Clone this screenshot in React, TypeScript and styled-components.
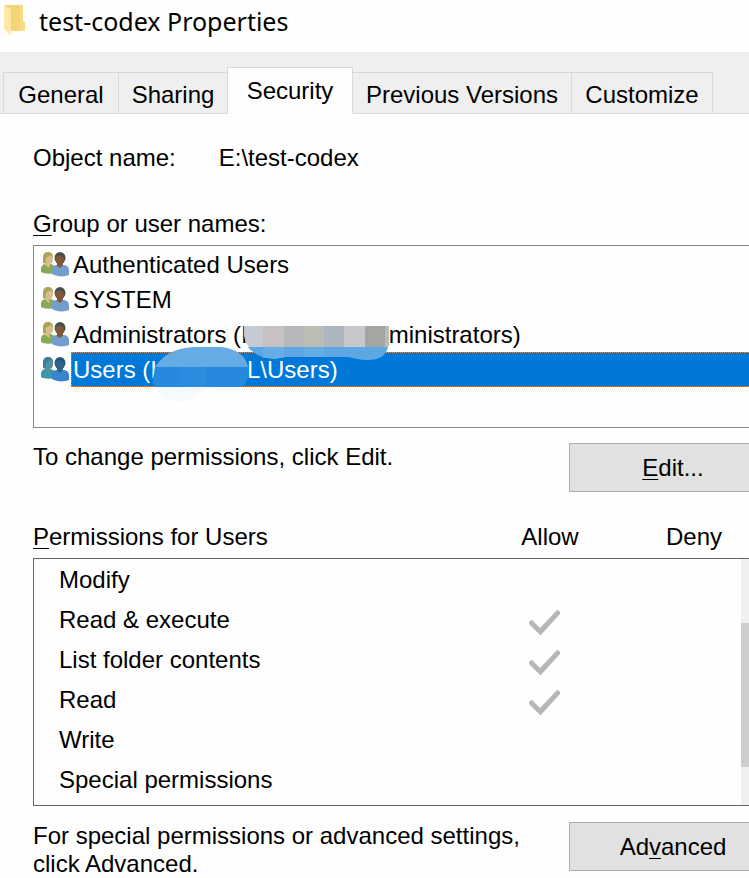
import React from "react";
import styled, { createGlobalStyle, css } from "styled-components";

const GlobalStyle = createGlobalStyle`
  * { box-sizing: border-box; }
  body {
    margin: 0;
    background: #fefefe;
    color: #000;
    font: 24px/28px "Liberation Sans", Arial, sans-serif;
    overflow-x: hidden;
  }
  u {
    text-decoration-thickness: 1px;
    text-underline-offset: 3px;
    text-decoration-skip-ink: none;
  }
`;

const Dialog = styled.main`
  overflow: hidden;
`;

const TitleBar = styled.header`
  display: flex;
  align-items: center;
  gap: 13px;
  height: 52px;
  padding: 0 4px 10px;
`;

const Title = styled.h1`
  margin: 0;
  font: 400 25px/34px "Noto Sans", "Open Sans", sans-serif;
`;

const TabStrip = styled.div`
  display: flex;
  align-items: flex-end;
  height: 62px;
  padding-left: 3px;
  background: #efefef;
  box-shadow: inset 0 -1px #d9d9d9;
`;

const Tab = styled.button<{ $width: number; $active?: boolean }>`
  flex: 0 0 ${(p) => p.$width}px;
  height: 42px;
  padding: 4px 0 0;
  border: 1px solid #d9d9d9;
  border-right-width: 0;
  background: #efefef;
  color: inherit;
  font: inherit;
  white-space: nowrap;

  &:last-child { border-right-width: 1px; }

  ${(p) => p.$active && css`
    height: 47px;
    padding: 0;
    border-right-width: 1px;
    border-bottom-color: #fefefe;
    background: #fefefe;

    & + button { border-left-width: 0; }
  `}
`;

const Page = styled.section`
  padding: 30px 0 0 33px;
`;

const ObjectRow = styled.dl`
  display: flex;
  gap: 43px;
  margin: 0 0 38px;
`;

const Term = styled.dt``;
const Value = styled.dd`
  margin: 0;
`;

const Label = styled.h2`
  margin: 0;
  font: inherit;
`;

const UserList = styled.ul`
  height: 183px;
  margin: 7px 0 15px;
  padding: 1px 0 0 7px;
  border: 1px solid #828790;
  border-right: 0;
  list-style: none;
`;

const UserRow = styled.li`
  display: flex;
  align-items: center;
  height: 35px;
`;

const UserName = styled.span<{ $selected?: boolean }>`
  display: flex;
  flex: 1;
  align-items: center;
  height: 35px;
  margin-left: 2px;
  padding-left: 1px;
  white-space: nowrap;
  border: 1px solid transparent;
  border-right: 0;
  ${(p) => p.$selected && css`
    border: 1px dotted #ff8728;
    border-right: 0;
    background: #0078d7;
    color: #fff;
  `}
`;

const Redacted = styled.span<{ $width: number }>`
  position: relative;
  z-index: 1;
  width: ${(p) => p.$width}px;
  height: 35px;

  svg {
    position: absolute;
    top: 0;
    left: 0;
    overflow: visible;
  }
`;

const ActionRow = styled.div`
  display: grid;
  grid-template-columns: 1fr 180px;
  align-items: start;
`;

const Note = styled.p`
  margin: 0;
  line-height: 28px;
`;

const PushButton = styled.button`
  width: 208px;
  height: 49px;
  padding: 0;
  border: 1px solid #adadad;
  background: #e1e1e1;
  color: inherit;
  font: inherit;
`;

const PermissionHead = styled.div`
  display: grid;
  grid-template-columns: 1fr 144px 127px;
  margin: 31px 0 7px;
`;

const ColumnName = styled.span`
  text-align: center;
  &:last-child { padding-left: 17px; }
`;

const PermissionBox = styled.div`
  display: flex;
  height: 248px;
  margin-bottom: 16px;
  border: 1px solid #646464;
  border-right: 0;
`;

const PermissionTable = styled.table`
  flex: 1;
  align-self: flex-start;
  border-collapse: collapse;
  table-layout: fixed;
  margin-top: 1px;
`;

const PermissionName = styled.th`
  height: 40px;
  padding: 0 0 0 25px;
  font-weight: 400;
  text-align: left;
`;

const PermissionCell = styled.td`
  width: 106px;
  height: 40px;
  padding: 0;
`;

const Tick = styled.label`
  display: grid;
  width: 32px;
  height: 26px;
  margin-top: 5px;

  input, svg { grid-area: 1 / 1; }
  input {
    width: 32px;
    height: 26px;
    margin: 0;
    appearance: none;
  }
`;

const ScrollTrack = styled.div`
  flex: 0 0 8px;
  padding-top: 64px;
  background: #f0f0f0;
`;

const ScrollThumb = styled.div`
  height: 144px;
  background: #cdcdcd;
`;

const FolderIcon = () => (
  <svg width="22" height="32" viewBox="0 0 22 32" aria-hidden="true">
    <path d="M0 0h19v16l2 2v8H6z" fill="#f5d476" />
    <path d="M16 0h3v16l2 2v8h-5z" fill="#f8dc85" />
    <path d="M0 0l7 4v26l-2-1-5-5z" fill="#ffe9a6" />
  </svg>
);

const PeopleIcon = ({ selected }: { selected?: boolean }) => {
  const c = selected
    ? { hair: "#377f96", face: "#588f9f", top: "#3d95a9", dark: "#23527a", skin: "#32628a", shirt: "#3984cc" }
    : { hair: "#aaa358", face: "#d9bd8c", top: "#88a957", dark: "#484c4a", skin: "#80593b", shirt: "#739dcc" };
  return (
    <svg width="28" height="25" viewBox="0 0 28 25" aria-hidden="true">
      <path d="M0 20v-3c0-3 2-5 5-5h5l4 2v7c-5 1-11 1-14-1z" fill={c.top} />
      <path d="M2 11V5c0-3 2-5 5-5s5 2 5 5l-1 6-5 1z" fill={c.hair} />
      <path d="M6 5l4-2 2 3c0 3-1 5-3 6H6c-2-2-2-5 0-7z" fill={c.face} />
      <path d="M3 12l3-1h3l-1 5z" fill={c.face} />
      <path d="M11 22v-3c0-4 2-6 5-6h6c4 0 6 2 6 6v4c-5 2-12 2-17-1z" fill={c.shirt} />
      <ellipse cx="19" cy="6" rx="5.5" ry="6" fill={c.dark} />
      <path d="M14 5l5-2 4 3c0 4-2 7-4 7-3 0-5-4-5-8z" fill={c.skin} />
      <path d="M16 11l6-1v3l-3 3-3-2z" fill={c.skin} />
    </svg>
  );
};

const GreyMosaic = () => (
  <svg width="141" height="35" viewBox="5 0 141 35" aria-hidden="true">
    <path d="M1 9h19v21H6q-5-6-5-13z" fill="#c4cbd5" />
    <path d="M20 9h21v21H20z" fill="#c7c1c1" />
    <path d="M41 9h20v21H41z" fill="#b5b7bb" />
    <path d="M61 9h20v21H61z" fill="#bbbdb4" />
    <path d="M81 9h20v21H81z" fill="#adb5be" />
    <path d="M101 9h21v21h-21z" fill="#c6c8cb" />
    <path d="M122 9h20v21h-20z" fill="#a4a6a1" />
    <path d="M142 9h4v19l-1 2h-3z" fill="#b8bdb7" />
    <path d="M5 30h140c-2 9-9 13-20 13-8 0-14-2-20-3H41l-8 2c-13 0-22-5-28-12z" fill="#5da7e4" />
    <path d="M20 30h21v11H20zM61 30h20v10H61z" fill="#66ace5" />
  </svg>
);

const BlueMosaic = () => (
  <svg width="90" height="35" viewBox="5 0 90 35" aria-hidden="true">
    <path d="M3 15C10 4 22-4 42-5h23c17 0 29 8 31 20z" fill="#65ace7" />
    <path d="M3 15h93v8c0 6-3 10-7 12H3Q-1 30 2 22z" fill="#2689df" />
    <path d="M28 15h26v20H28z" fill="#2a8bdf" />
    <path d="M3 35h63q-10 1-18 5-15 13-29 8Q6 44 3 35z" fill="#f5faff" />
  </svg>
);

const CheckMark = () => (
  <svg width="32" height="26" viewBox="0 0 32 26" aria-hidden="true">
    <path d="M0 12l2-2h1l8 8L28 0h1l2 2v2L12 25h-1L0 14z" fill="#b7b7b7" />
  </svg>
);

const tabs = [
  { name: "General", width: 115 },
  { name: "Sharing", width: 109 },
  { name: "Security", width: 126, active: true },
  { name: "Previous Versions", width: 218 },
  { name: "Customize", width: 142 },
];

const permissions = [
  { name: "Modify", allow: false },
  { name: "Read & execute", allow: true },
  { name: "List folder contents", allow: true },
  { name: "Read", allow: true },
  { name: "Write", allow: false },
  { name: "Special permissions", allow: false },
];

export default function App() {
  return (
    <>
      <GlobalStyle />
      <Dialog>
        <TitleBar>
          <FolderIcon />
          <Title>test-codex Properties</Title>
        </TitleBar>
        <TabStrip role="tablist">
          {tabs.map((t) => (
            <Tab key={t.name} type="button" role="tab" aria-selected={!!t.active} $width={t.width} $active={t.active}>
              {t.name}
            </Tab>
          ))}
        </TabStrip>
        <Page>
          <ObjectRow>
            <Term>Object name:</Term>
            <Value>E:\test-codex</Value>
          </ObjectRow>
          <Label id="groups"><u>G</u>roup or user names:</Label>
          <UserList role="listbox" aria-labelledby="groups">
            <UserRow role="option" aria-selected={false}>
              <PeopleIcon />
              <UserName>Authenticated Users</UserName>
            </UserRow>
            <UserRow role="option" aria-selected={false}>
              <PeopleIcon />
              <UserName>SYSTEM</UserName>
            </UserRow>
            <UserRow role="option" aria-selected={false}>
              <PeopleIcon />
              <UserName>
                Administrators (I
                <Redacted $width={141}><GreyMosaic /></Redacted>
                ministrators)
              </UserName>
            </UserRow>
            <UserRow role="option" aria-selected>
              <PeopleIcon selected />
              <UserName $selected>
                Users (I
                <Redacted $width={90}><BlueMosaic /></Redacted>
                L\Users)
              </UserName>
            </UserRow>
          </UserList>
          <ActionRow>
            <Note>To change permissions, click Edit.</Note>
            <PushButton type="button"><u>E</u>dit...</PushButton>
          </ActionRow>
          <PermissionHead>
            <Label id="permissions"><u>P</u>ermissions for Users</Label>
            <ColumnName>Allow</ColumnName>
            <ColumnName>Deny</ColumnName>
          </PermissionHead>
          <PermissionBox>
            <PermissionTable aria-labelledby="permissions">
              <tbody>
                {permissions.map((p) => (
                  <tr key={p.name}>
                    <PermissionName scope="row">{p.name}</PermissionName>
                    <PermissionCell>
                      {p.allow && (
                        <Tick>
                          <input type="checkbox" checked disabled readOnly aria-label={`Allow ${p.name}`} />
                          <CheckMark />
                        </Tick>
                      )}
                    </PermissionCell>
                    <PermissionCell />
                  </tr>
                ))}
              </tbody>
            </PermissionTable>
            <ScrollTrack><ScrollThumb /></ScrollTrack>
          </PermissionBox>
          <ActionRow>
            <Note>For special permissions or advanced settings, click Advanced.</Note>
            <PushButton type="button">Ad<u>v</u>anced</PushButton>
          </ActionRow>
        </Page>
      </Dialog>
    </>
  );
}
